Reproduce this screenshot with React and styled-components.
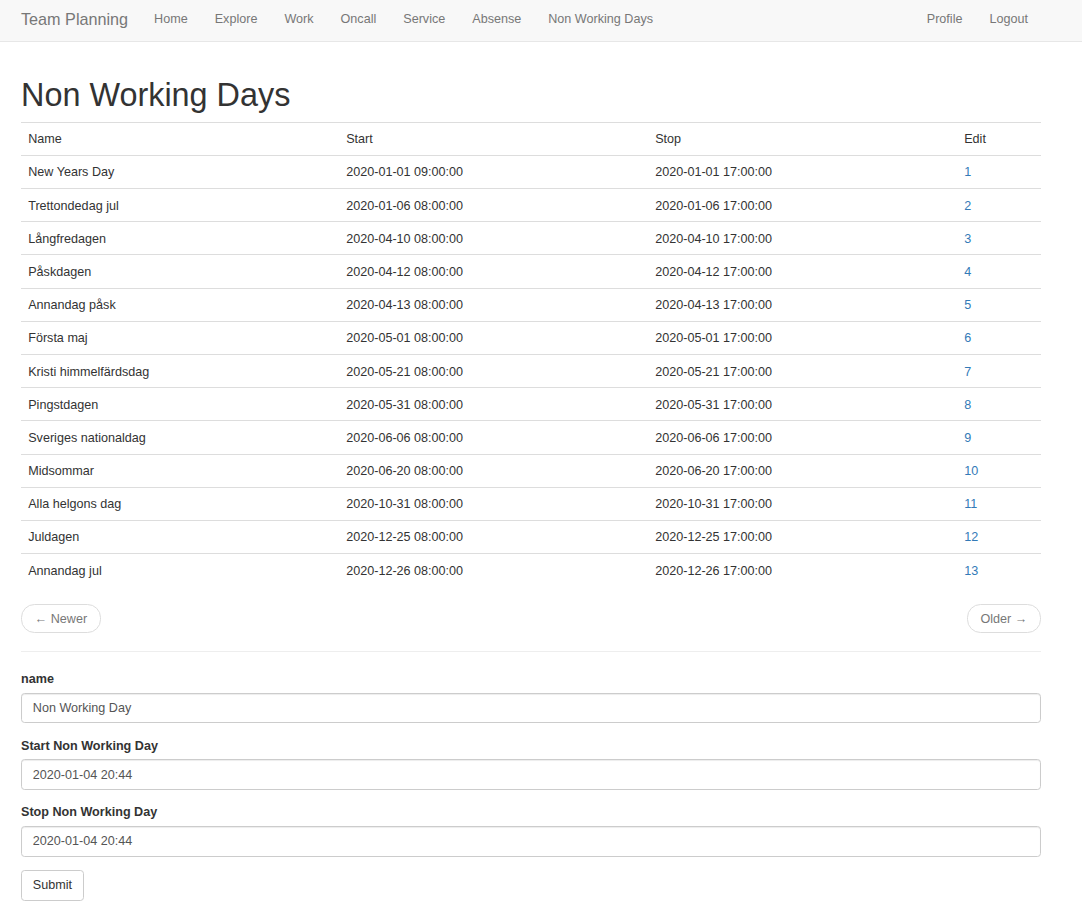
import React from "react";
import styled, { createGlobalStyle } from "styled-components";

const Global = createGlobalStyle`
  html, body { margin: 0; padding: 0; background: #fff; }
  body {
    font-family: "Liberation Sans", Arial, Helvetica, sans-serif;
    font-size: 12.6px;
    line-height: 18px;
    color: #333;
  }
  * { box-sizing: border-box; }
`;

const Navbar = styled.nav`
  height: 42px;
  background: #f8f8f8;
  border-bottom: 1px solid #e7e7e7;
  display: flex;
  align-items: flex-start;
  padding: 0 41px 0 21px;
`;

const Brand = styled.a`
  font-size: 16.2px;
  line-height: 18px;
  color: #777;
  padding-top: 10px;
  margin-right: 12.5px;
  text-decoration: none;
`;

const NavList = styled.ul`
  list-style: none;
  margin: 0;
  padding: 0;
  display: flex;
  margin-left: ${(p) => (p.$right ? "auto" : "0")};
  margin-right: ${(p) => (p.$right ? "-0.5px" : "0")};
`;

const NavLink = styled.a`
  display: block;
  padding: 10px 13.5px 0;
  line-height: 18px;
  color: #777;
  text-decoration: none;
`;

const Container = styled.main`
  width: 1020px;
  margin-left: 21px;
  padding-top: 18px;
`;

const Title = styled.h1`
  font-size: 32.4px;
  font-weight: 500;
  line-height: 1.1;
  margin: 18px 0 8px;
  color: #333;
`;

const Table = styled.table`
  width: 100%;
  border-collapse: collapse;
  border-spacing: 0;
  margin-bottom: 18px;
`;

const Cell = styled.td`
  padding: 7.6px 7.2px 6.6px;
  line-height: 18px;
  border-top: 1px solid #ddd;
  text-align: left;
  vertical-align: top;
  font-weight: normal;
  width: ${(p) => p.$w || "auto"};
`;

const EditLink = styled.a`
  color: #337ab7;
  text-decoration: none;
`;

const Pager = styled.ul`
  list-style: none;
  margin: 18px 0;
  padding: 0;
  display: flex;
  justify-content: space-between;
`;

const PagerBtn = styled.a`
  display: inline-block;
  padding: 4.5px 12.6px;
  line-height: 18px;
  background: #fff;
  border: 1px solid #ddd;
  border-radius: 13.5px;
  color: #777;
  text-decoration: none;
`;

const Rule = styled.hr`
  margin: 18px 0;
  border: 0;
  border-top: 1px solid #eee;
`;

const FormGroup = styled.div`
  margin-bottom: 13.5px;
`;

const Label = styled.label`
  display: block;
  font-weight: 700;
  margin-bottom: 4.5px;
  line-height: 18px;
`;

const Input = styled.input`
  display: block;
  width: 100%;
  height: 30.6px;
  padding: 5.4px 10.8px;
  font-family: inherit;
  font-size: 12.6px;
  line-height: 18px;
  color: #555;
  background: #fff;
  border: 1px solid #ccc;
  border-radius: 3.6px;
  box-shadow: inset 0 1px 1px rgba(0, 0, 0, 0.075);
  outline: none;
`;

const SubmitButton = styled.button`
  display: inline-block;
  padding: 5.4px 10.8px;
  font-family: inherit;
  font-size: 12.6px;
  line-height: 18px;
  color: #333;
  background: #fff;
  border: 1px solid #ccc;
  border-radius: 3.6px;
  cursor: pointer;
`;

const rows = [
  ["New Years Day", "2020-01-01 09:00:00", "2020-01-01 17:00:00"],
  ["Trettondedag jul", "2020-01-06 08:00:00", "2020-01-06 17:00:00"],
  ["Långfredagen", "2020-04-10 08:00:00", "2020-04-10 17:00:00"],
  ["Påskdagen", "2020-04-12 08:00:00", "2020-04-12 17:00:00"],
  ["Annandag påsk", "2020-04-13 08:00:00", "2020-04-13 17:00:00"],
  ["Första maj", "2020-05-01 08:00:00", "2020-05-01 17:00:00"],
  ["Kristi himmelfärdsdag", "2020-05-21 08:00:00", "2020-05-21 17:00:00"],
  ["Pingstdagen", "2020-05-31 08:00:00", "2020-05-31 17:00:00"],
  ["Sveriges nationaldag", "2020-06-06 08:00:00", "2020-06-06 17:00:00"],
  ["Midsommar", "2020-06-20 08:00:00", "2020-06-20 17:00:00"],
  ["Alla helgons dag", "2020-10-31 08:00:00", "2020-10-31 17:00:00"],
  ["Juldagen", "2020-12-25 08:00:00", "2020-12-25 17:00:00"],
  ["Annandag jul", "2020-12-26 08:00:00", "2020-12-26 17:00:00"],
];

const leftLinks = ["Home", "Explore", "Work", "Oncall", "Service", "Absense", "Non Working Days"];

export default function App() {
  return (
    <>
      <Global />
      <Navbar>
        <Brand href="#">Team Planning</Brand>
        <NavList>
          {leftLinks.map((l) => (
            <li key={l}>
              <NavLink href="#">{l}</NavLink>
            </li>
          ))}
        </NavList>
        <NavList $right>
          <li><NavLink href="#">Profile</NavLink></li>
          <li><NavLink href="#">Logout</NavLink></li>
        </NavList>
      </Navbar>
      <Container>
        <Title>Non Working Days</Title>
        <Table>
          <thead>
            <tr>
              <Cell as="th" $w="318px">Name</Cell>
              <Cell as="th" $w="309px">Start</Cell>
              <Cell as="th" $w="309px">Stop</Cell>
              <Cell as="th" $w="84px">Edit</Cell>
            </tr>
          </thead>
          <tbody>
            {rows.map((r, i) => (
              <tr key={i}>
                <Cell>{r[0]}</Cell>
                <Cell>{r[1]}</Cell>
                <Cell>{r[2]}</Cell>
                <Cell>
                  <EditLink href="#">{i + 1}</EditLink>
                </Cell>
              </tr>
            ))}
          </tbody>
        </Table>
        <Pager>
          <li><PagerBtn href="#">← Newer</PagerBtn></li>
          <li><PagerBtn href="#">Older →</PagerBtn></li>
        </Pager>
        <Rule />
        <form onSubmit={(e) => e.preventDefault()}>
          <FormGroup>
            <Label>name</Label>
            <Input defaultValue="Non Working Day" />
          </FormGroup>
          <FormGroup>
            <Label>Start Non Working Day</Label>
            <Input defaultValue="2020-01-04 20:44" />
          </FormGroup>
          <FormGroup>
            <Label>Stop Non Working Day</Label>
            <Input defaultValue="2020-01-04 20:44" />
          </FormGroup>
          <SubmitButton type="submit">Submit</SubmitButton>
        </form>
      </Container>
    </>
  );
}
